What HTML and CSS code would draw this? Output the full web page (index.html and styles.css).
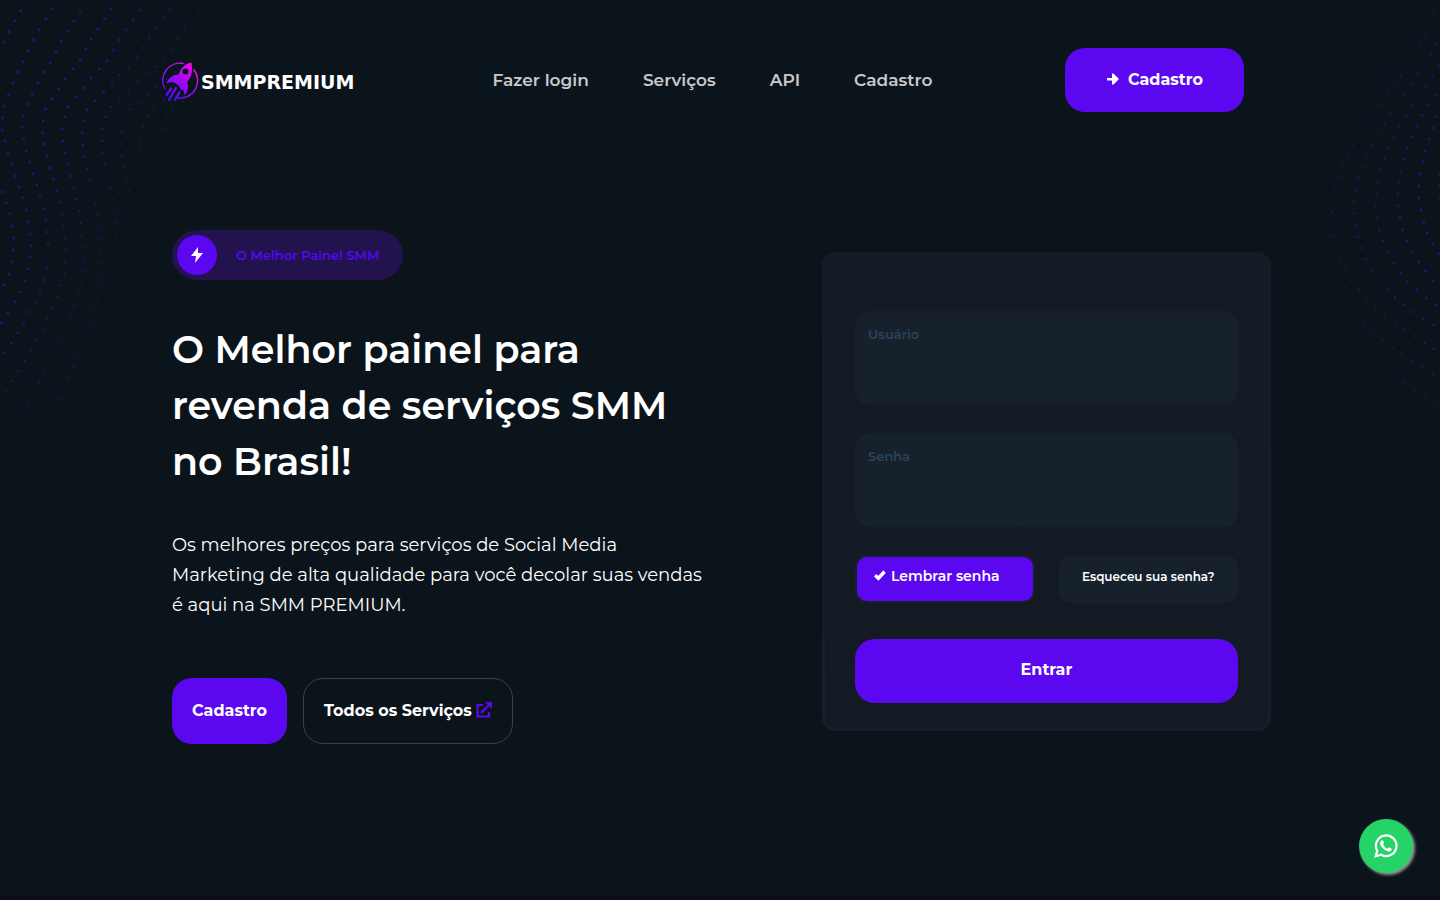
FILE: index.html
```html
<!DOCTYPE html>
<html lang="pt-BR">
<head>
    <meta charset="UTF-8">
    <title>SMM PREMIUM</title>
    <meta name="viewport" content="width=device-width, initial-scale=1.0">
    <link rel="stylesheet" href="styles.css">
</head>
<body>

<svg class="dots dots-left" id="dotsLeft" width="320" height="480" aria-hidden="true"></svg>
<svg class="dots dots-right" id="dotsRight" width="240" height="480" aria-hidden="true"></svg>

<header class="header container">
    <a class="logo" href="#">
        <svg width="38" height="40" viewBox="0 0 38 40" aria-hidden="true">
            <defs>
                <linearGradient id="logoGradient" gradientUnits="userSpaceOnUse" x1="8" y1="36" x2="30" y2="2">
                    <stop offset="0" stop-color="#4a0cff"/>
                    <stop offset="1" stop-color="#f008e8"/>
                </linearGradient>
            </defs>
            <g fill="none" stroke="url(#logoGradient)">
                <path stroke-width="1.5" d="M21.500 1.500A17.300 17.300 0 0 0 3 27M31.500 7.500A17.300 17.300 0 0 1 15 35.700"/>
                <path stroke-width="2.200" stroke-linecap="round" d="M9 26.500L4.500 33M14 26L7 38M17.500 30.500L13 37.500"/>
            </g>
            <path fill="url(#logoGradient)" fill-rule="evenodd" d="M29.500.500C23 1.500 19 6 16.500 12.500C10 13 6.500 16 4.500 21.500C9 19.500 12 20 14.500 22C17 24 19 26 18.500 28.500C21 26.500 22 29 22.500 33.500C26 29 27 25 25 20C29.500 15.500 31 9 29.500.500ZM23.500 6.500A3 3 0 1 1 23.400 12.500A3 3 0 1 1 23.500 6.500Z"/>
        </svg>
        <span>SMMPREMIUM</span>
    </a>
    <nav class="menu">
        <a href="#">Fazer login</a>
        <a href="#">Serviços</a>
        <a href="#">API</a>
        <a href="#">Cadastro</a>
    </nav>
    <a class="btn btn-header" href="#">
        <svg width="13" height="14" viewBox="0 0 13 14" aria-hidden="true">
            <path fill="#fff" d="M1 6h5V1.500H7.500L13 7L7.500 12.500H6V8.500H1Z"/>
        </svg>
        Cadastro
    </a>
</header>

<main class="hero container">
    <section class="intro">
        <div class="tag">
            <span class="tag-icon">
                <svg width="14" height="16" viewBox="0 0 14 16" aria-hidden="true">
                    <path fill="#fff" d="M8 0L1 9H6L5 16L13 6H8Z"/>
                </svg>
            </span>
            O Melhor Painel SMM
        </div>
        <h1>O Melhor painel para revenda de serviços SMM no Brasil!</h1>
        <p>Os melhores preços para serviços de Social Media Marketing de alta qualidade para você decolar suas vendas é aqui na SMM PREMIUM.</p>
        <div class="actions">
            <a class="btn" href="#">Cadastro</a>
            <a class="btn btn-outline" href="#">
                Todos os Serviços
                <svg width="16" height="16" viewBox="0 0 16 16" aria-hidden="true">
                    <path fill="none" stroke="#5b08f0" stroke-width="2.200" d="M7 3H1.500V14.500H13V10M5 11L13 3"/>
                    <path fill="#5b08f0" d="M9 0H16V7Z"/>
                </svg>
            </a>
        </div>
    </section>

    <form class="login">
        <input class="field" type="text" aria-label="Usuário" placeholder="Usuário">
        <input class="field" type="password" aria-label="Senha" placeholder="Senha">
        <div class="options">
            <label class="remember">
                <input type="checkbox" checked>
                Lembrar senha
            </label>
            <a class="forgot" href="#">Esqueceu sua senha?</a>
        </div>
        <button class="btn btn-submit" type="submit">Entrar</button>
    </form>
</main>

<a class="whatsapp" href="#" aria-label="WhatsApp">
    <svg width="24" height="24" viewBox="0 0 24 24" aria-hidden="true">
        <path fill="none" stroke="#fff" stroke-width="2.200" d="M1.700 22.300L3.200 16.800A10.300 10.300 0 1 1 7.200 20.800Z"/>
        <path fill="#fff" d="M8 6.200C8.600 6 9 6.200 9.200 6.800L10 8.700C10.200 9.200 9.200 10.200 9 10.500C10 12.500 11.500 13.800 13.500 14.600C14 14.300 14.600 13.100 15.100 13.300L17.300 14.400C18.200 14.900 17.500 16.500 16.700 17C14.800 18.200 12 17.200 9.500 15C7 12.700 5.400 9.600 6.500 7.500C6.900 6.800 7.400 6.300 8 6.200Z"/>
    </svg>
</a>

<script src="dots.js"></script>
</body>
</html>
```
FILE: styles.css
```css
* {
    box-sizing: border-box;
}
body {
    margin: 0;
    min-height: 100vh;
    position: relative;
    font-family: Montserrat, Inter, sans-serif;
    color: #fff;
    background: #0c141b;
    border-bottom: 4px solid #0a0e18;
    overflow-x: hidden;
}
a {
    color: inherit;
    text-decoration: none;
}
.container {
    max-width: 1140px;
    margin: 0 auto;
    position: relative;
}

/* background dots */
.dots {
    position: absolute;
    top: 0;
}
.dots-left {
    left: 0;
}
.dots-right {
    right: 0;
}

/* header */
.header {
    display: flex;
    align-items: center;
    justify-content: space-between;
    padding: 48px 46px 0 12px;
}
.logo {
    display: flex;
    align-items: center;
    gap: 1px;
    min-width: 198px;
    padding-top: 4px;
    font: bold 19px "DejaVu Sans", sans-serif;
}
.menu {
    display: flex;
    gap: 54px;
    color: #c9c9cc;
    font-size: 17px;
    font-weight: 600;
}
.btn {
    display: flex;
    align-items: center;
    justify-content: center;
    min-height: 64px;
    padding: 0 20px 2px;
    border: 0;
    border-radius: 20px;
    background: #5b08f0;
    color: #fff;
    font-family: inherit;
    font-size: 16px;
    font-weight: 700;
}
.btn-header {
    gap: 9px;
    padding: 0 41px 2px;
}

/* hero */
.hero {
    display: grid;
    grid-template-columns: 540px 449px;
    justify-content: space-between;
    align-items: center;
    padding: 118px 19px 60px 22px;
}
.tag {
    display: inline-flex;
    align-items: center;
    gap: 19px;
    padding: 5px 24px 5px 5px;
    border-radius: 25px;
    background: #22124e;
    color: #5308ee;
    font-size: 13px;
    font-weight: 600;
}
.tag-icon {
    display: flex;
    align-items: center;
    justify-content: center;
    width: 40px;
    height: 40px;
    border-radius: 50%;
    background: #5b08f0;
}
h1 {
    margin: 42px 0 40px;
    font-size: 38px;
    font-weight: 600;
    line-height: 56px;
}
p {
    margin: 0 0 58px;
    font-size: 18px;
    line-height: 30px;
}
.actions {
    display: flex;
    gap: 16px;
}
.btn-outline {
    gap: 4px;
    min-height: 66px;
    border: 1px solid #3c4148;
    background: none;
}

/* login */
.login {
    display: flex;
    flex-direction: column;
    gap: 28px;
    margin-top: 8px;
    padding: 56px 30px 25px;
    border: 3px solid transparent;
    border-radius: 14px;
    background: linear-gradient(#151b26, #141a24) padding-box, linear-gradient(#111e26, #181d2c) border-box;
}
.field {
    width: 100%;
    height: 94px;
    padding: 13px 13px 61px;
    border: 0;
    border-radius: 15px;
    background: #16212c;
    color: #fff;
    font-family: inherit;
    font-size: 13px;
    font-weight: 600;
    line-height: 20px;
}
.field::placeholder {
    color: #2c435b;
    opacity: 1;
}
.options {
    display: grid;
    grid-template-columns: 1fr 1fr;
    gap: 24px;
    margin-bottom: 8px;
}
.remember {
    display: flex;
    align-items: center;
    gap: 5px;
    height: 48px;
    padding: 0 17px 5px;
    border: 2px solid #16212c;
    border-radius: 12px;
    background: #5b08f0;
    font-size: 14px;
    font-weight: 600;
}
.remember input {
    appearance: none;
    width: 12px;
    height: 12px;
    margin: 0;
    background: #fff;
    clip-path: polygon(0 55%, 17% 33%, 36% 48%, 78% 3%, 98% 25%, 37% 90%);
}
.forgot {
    display: flex;
    align-items: center;
    justify-content: center;
    padding-bottom: 4px;
    border-radius: 12px;
    background: #16212c;
    font-size: 12px;
    font-weight: 600;
}

.whatsapp {
    position: fixed;
    right: 27px;
    bottom: 27px;
    display: flex;
    align-items: center;
    justify-content: center;
    width: 54px;
    height: 54px;
    border-radius: 50%;
    background: #25d366;
    box-shadow: 2px 2px 3px #999;
}
```
FILE: dots.js
```javascript
// value at y on a curve given as [y, value] points
function curve(points, y) {
    let i = 0;
    while (i < points.length - 2 && y > points[i + 1][0]) i++;
    const [y0, v0] = points[i];
    const [y1, v1] = points[i + 1];
    return v0 + (v1 - v0) * (y - y0) / (y1 - y0);
}

function drawDots(id, line, spacing, edge, from, to, side) {
    let circles = '';
    for (let k = from; k <= to; k++) {
        const at = y => curve(line, y) + k * curve(spacing, y);
        let travelled = (k % 2) * 2;
        for (let y = 1; y < 470; y++) {
            travelled += Math.hypot(1, at(y) - at(y - 1));
            if (travelled < 12) continue;
            travelled -= 12;
            const x = at(y);
            const fade = Math.min(1, side * (curve(edge, y) - x) / 190, (470 - y) / 120);
            if (fade <= 0) continue;
            circles += `<circle cx="${x.toFixed(1)}" cy="${y}" r="${(0.8 + fade * 0.6).toFixed(2)}" opacity="${(fade * 0.45).toFixed(2)}"/>`;
        }
    }
    document.getElementById(id).innerHTML = `<g fill="#5b08f0">${circles}</g>`;
}

drawDots('dotsLeft',
    [[0, 27], [41, 4], [75, -10], [110, -18], [130, -18], [150, -12], [190, 2], [215, 10], [240, 14], [255, 13], [275, 9], [295, 0], [330, -26], [370, -60], [460, -140]],
    [[0, 30], [60, 28], [110, 21], [150, 19], [240, 17], [290, 19], [330, 23], [460, 34]],
    [[0, 320], [100, 280], [240, 215], [340, 190], [460, 150]],
    -2, 12, 1);

drawDots('dotsRight',
    [[0, 237], [22, 231], [47, 220], [70, 205], [93, 189], [127, 166], [149, 150], [174, 139], [201, 132], [229, 132], [242, 135], [256, 139], [280, 151], [301, 168], [319, 189], [334, 212], [350, 235], [460, 420]],
    [[0, 15], [118, 16], [150, 19], [190, 21], [240, 24], [280, 27], [350, 40], [460, 50]],
    [[0, 130], [150, 45], [240, 5], [300, 40], [400, 110], [460, 190]],
    -10, 10, -1);
```
